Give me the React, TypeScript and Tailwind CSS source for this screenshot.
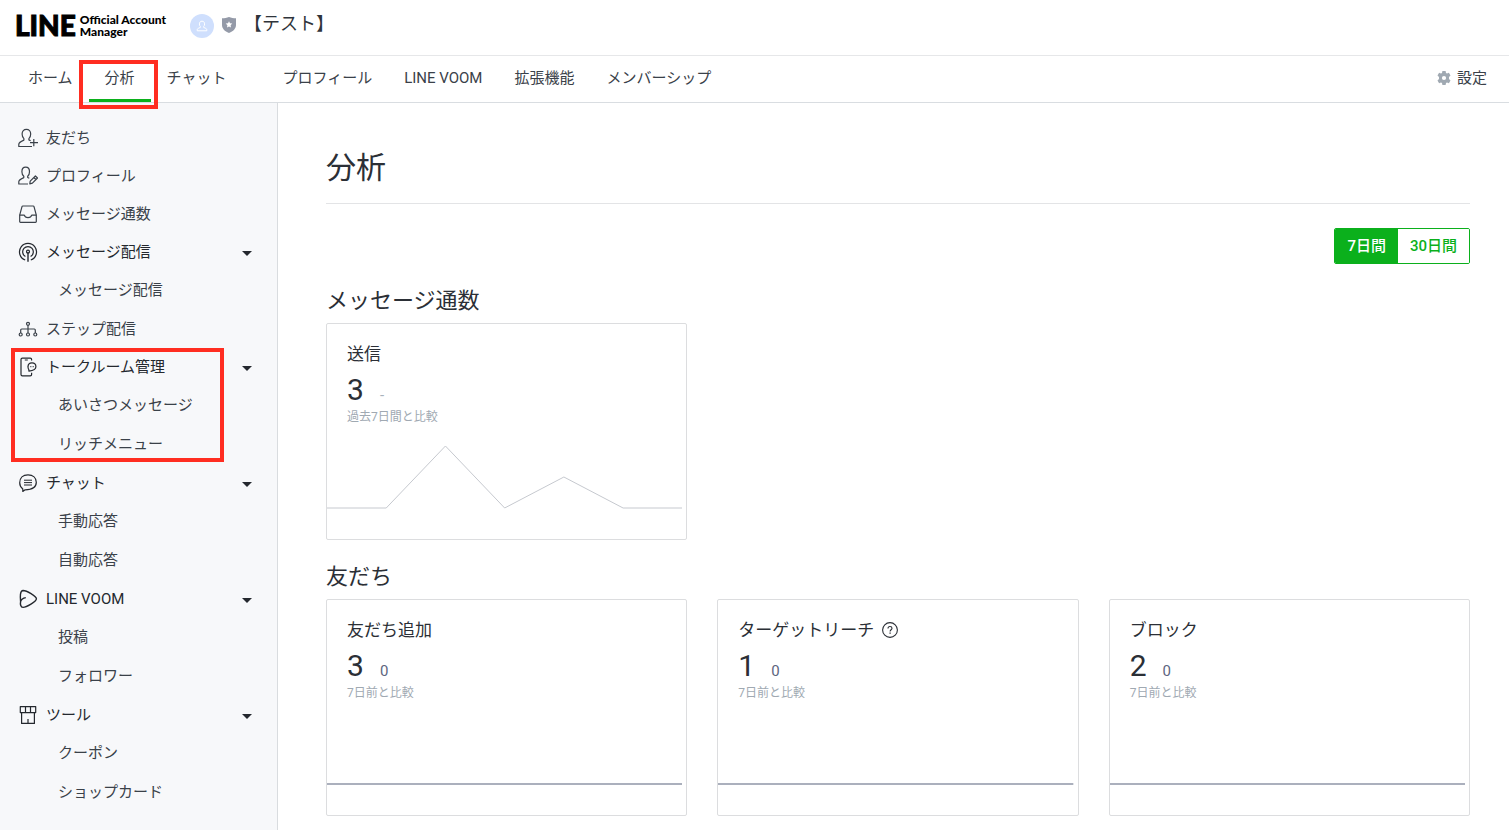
import { useState, type ReactNode } from 'react'
import clsx from 'clsx'

type Metric = {
  title: string
  value: number
  diff: string
  note: string
  points: number[]
  help?: boolean
}

type SideItem = {
  label: string
  icon: ReactNode
  children?: string[]
  marked?: boolean
}

/** 20px line icon used in the side menu. */
function LineIcon({ children }: { children: ReactNode }) {
  return (
    <svg
      viewBox="0 0 20 20"
      className="size-5 shrink-0"
      fill="none"
      stroke="currentColor"
      strokeWidth="1.2"
      strokeLinejoin="round"
      aria-hidden="true"
    >
      {children}
    </svg>
  )
}

const icons = {
  friends: (
    <LineIcon>
      <path d="M14 18.500H.8v-2.200c0-1.500 1-2.500 5.100-4.200V10.600C4.700 9.600 4.100 8 4.100 6 4.100 3.200 5.800 1.400 8.400 1.400s4.300 1.800 4.300 4.600c0 2-.6 3.600-1.800 4.600v1.300l1.700.9" />
      <path d="M15.800 11v7.300M12 14.600h8" />
    </LineIcon>
  ),
  profile: (
    <LineIcon>
      <path d="M10 18H.8v-2.200c0-1.500 1-2.500 5-4.200V10.200C4.500 9.200 3.900 7.600 3.900 5.700 3.900 2.900 5.300 1.200 7.700 1.200s3.800 1.700 3.800 4.500c0 1.900-.6 3.500-1.800 4.500v1.300l1.600.8" />
      <path d="M11.800 17.800l.4-2.700 5.200-5.100 2.100 2-5.100 5.200zM15.800 11.500l2.100 2" />
    </LineIcon>
  ),
  inbox: (
    <LineIcon>
      <path d="M1.700 11.200 4 2.700c.1-.4.4-.7.9-.7h10.200c.5 0 .8.3.9.7l2.300 8.500v6.300a.8.800 0 0 1-.8.8h-15a.8.800 0 0 1-.8-.8z" />
      <path d="M1.700 11.200h4.600c.5 1.800 1.800 2.400 3.700 2.400s3.200-.6 3.700-2.400h4.600" />
    </LineIcon>
  ),
  broadcast: (
    <LineIcon>
      <path d="M7.200 18a8.500 8.500 0 1 1 5.600 0" />
      <path d="M7.400 14.500a5.300 5.300 0 1 1 5.200 0" />
      <circle cx="10" cy="9.700" r="1.500" />
      <path d="M10 10v9.800" strokeWidth="1.400" />
    </LineIcon>
  ),
  steps: (
    <LineIcon>
      <circle cx="10" cy="4.800" r="1.500" />
      <circle cx="2.700" cy="15.500" r="1.500" />
      <circle cx="10" cy="15.500" r="1.500" />
      <circle cx="17.300" cy="15.500" r="1.500" />
      <path d="M10 6.300V14M2.700 14v-3c0-.7.3-1 1-1h12.600c.7 0 1 .3 1 1v3" />
    </LineIcon>
  ),
  talkroom: (
    <LineIcon>
      <path d="M13.600 3.400V2.500c0-.9-.5-1.400-1.400-1.400H4.400c-.9 0-1.400.5-1.400 1.400v15c0 .9.500 1.400 1.400 1.400h7.800c.9 0 1.400-.5 1.400-1.400v-1.700M6.800 3h3" />
      <path d="M11 14.200l-.2-1.600a4.300 4.300 0 0 1-.8-2.700c0-2.400 1.700-4 4-4s3.900 1.600 3.900 3.900c0 2.800-2.500 3.900-6.900 4.400z" />
      <path d="M12 9.700h4" strokeWidth=".8" strokeDasharray="1 .5" />
    </LineIcon>
  ),
  chat: (
    <LineIcon>
      <path d="M4.800 18.400v-2.500C2.800 14.500 1.700 12.400 1.700 9.800c0-4.900 3.300-8 8.300-8s8.300 3 8.300 7.500c0 5.400-4.800 7.500-11.200 7.500z" />
      <path d="M6 7.200h8M6 9.600h8M6 12h8" strokeWidth="1" />
    </LineIcon>
  ),
  voom: (
    <LineIcon>
      <path
        d="M7.800 8.600C5.500 9 3.300 10.200 2.600 12.600 2.200 14.700 2.400 18.400 5 18.400c3.300-.2 13.400-5.600 13.400-8.600C18.400 6.900 8.500 1.500 5.100 1.500 1.600 1.700 2.300 8.500 2.600 12.600"
        strokeWidth="1.400"
      />
    </LineIcon>
  ),
  tools: (
    <LineIcon>
      <path d="M2.300 1.600h15.400v6H2.300zM7.500 1.600v6M12.500 1.600v6M3.600 7.600v10.800h12.800V7.600M10 18.400v-4.500" />
    </LineIcon>
  ),
}

const sideItems: SideItem[] = [
  { label: '友だち', icon: icons.friends },
  { label: 'プロフィール', icon: icons.profile },
  { label: 'メッセージ通数', icon: icons.inbox },
  { label: 'メッセージ配信', icon: icons.broadcast, children: ['メッセージ配信'] },
  { label: 'ステップ配信', icon: icons.steps },
  {
    label: 'トークルーム管理',
    icon: icons.talkroom,
    children: ['あいさつメッセージ', 'リッチメニュー'],
    marked: true,
  },
  { label: 'チャット', icon: icons.chat, children: ['手動応答', '自動応答'] },
  { label: 'LINE VOOM', icon: icons.voom, children: ['投稿', 'フォロワー'] },
  { label: 'ツール', icon: icons.tools, children: ['クーポン', 'ショップカード'] },
]

const mainTabs = ['ホーム', '分析', 'チャット']
const subTabs = ['プロフィール', 'LINE VOOM', '拡張機能', 'メンバーシップ']

const messageMetric: Metric = {
  title: '送信',
  value: 3,
  diff: '-',
  note: '過去7日間と比較',
  points: [0, 0, 2, 0, 1, 0, 0],
}

const friendMetrics: Metric[] = [
  { title: '友だち追加', value: 3, diff: '0', note: '7日前と比較', points: [0, 0, 0, 0, 0, 0, 0] },
  { title: 'ターゲットリーチ', value: 1, diff: '0', note: '7日前と比較', points: [0, 0, 0, 0, 0, 0, 0], help: true },
  { title: 'ブロック', value: 2, diff: '0', note: '7日前と比較', points: [0, 0, 0, 0, 0, 0, 0] },
]

/** Red frame laid over an area of the screen. */
function Marker({ className }: { className: string }) {
  return <span className={clsx('pointer-events-none absolute z-10 border-4 border-[#ff2d21]', className)} />
}

function Header() {
  return (
    <header className="flex h-14 items-start border-b border-[#e6e7e9] px-[15px] pt-[10px]">
      <a href="#" className="mt-[2px] flex items-center gap-1 font-['Lato'] font-black text-black">
        <span className="text-[28px] leading-6 [-webkit-text-stroke:1px_black]">LINE</span>
        <span className="pt-[2px] text-xs leading-3">
          Official Account
          <br />
          Manager
        </span>
      </a>
      <div className="ml-6 flex items-center gap-[7px]">
        <span className="mt-1 flex size-6 items-center justify-center rounded-full bg-[#cfdffd]">
          <svg viewBox="0 0 12 12" className="size-3" fill="none" stroke="#fff" aria-hidden="true">
            <path d="M1.200 10.800V9.700c0-1 .7-1.300 3.200-2.300v-.8c-.7-.6-1-1.500-1-2.700C3.400 2.300 4.400 1.200 6 1.200s2.600 1.100 2.600 2.700c0 1.200-.3 2.100-1 2.700v.8c2.500 1 3.200 1.300 3.200 2.300v1.100z" />
          </svg>
        </span>
        <svg viewBox="0 0 16 16" className="mt-[2px] size-4" aria-hidden="true">
          <path d="M8 0c2.200 1 4.500 1.300 7 1.300V8c0 3.500-2.700 6.300-7 8-4.300-1.700-7-4.500-7-8V1.300C3.500 1.300 5.800 1 8 0z" fill="#949aa8" />
          <path d="M8 4.200l1 2.100 2.300.3-1.700 1.600.4 2.300-2-1.100-2 1.100.4-2.300-1.700-1.600L7 6.300z" fill="#fff" />
        </svg>
        <span className="text-lg leading-6 text-[#2f343b]">【テスト】</span>
      </div>
    </header>
  )
}

function TopNav() {
  const [active, setActive] = useState('分析')

  const renderTab = (tab: string) => (
    <li key={tab} className="relative flex">
      <button type="button" onClick={() => setActive(tab)} className="relative px-4 pb-[2px] whitespace-nowrap">
        {tab}
        {tab === active && <span className="absolute inset-x-0 bottom-0 h-[3px] bg-[#0bb01c]" />}
      </button>
      {tab === '分析' && <Marker className="top-1 -right-[7px] -bottom-[7px] -left-[10px]" />}
    </li>
  )

  return (
    <nav className="flex h-[47px] border-b border-[#d9dde1] px-3 text-[15px] text-[#3a4149]">
      <ul className="flex">{mainTabs.map(renderTab)}</ul>
      <ul className="ml-6 flex">{subTabs.map(renderTab)}</ul>
      <a href="#" className="mr-[10px] ml-auto flex items-center gap-[6px] pb-[2px]">
        <svg viewBox="0 0 14 14" className="size-[14px]" aria-hidden="true">
          <path
            fill="#a0a9b2"
            fillRule="evenodd"
            d="M5.400 0h3.200l.4 1.900 1 .6 1.900-.7 1.600 2.800L12 5.900v2.200l1.500 1.300-1.600 2.800-1.900-.7-1 .6-.4 1.900H5.400L5 12.100l-1-.6-1.900.7L.5 9.400 2 8.100V5.900L.5 4.600l1.600-2.800 1.900.7 1-.6zM7 4.900a2.100 2.100 0 1 0 0 4.200 2.100 2.100 0 0 0 0-4.200z"
          />
        </svg>
        設定
      </a>
    </nav>
  )
}

function SideMenuItem({ item }: { item: SideItem }) {
  const [open, setOpen] = useState(true)
  const row = 'flex h-[38px] w-full items-center gap-2 pr-[25px] pl-[18px] text-left'

  if (!item.children) {
    return (
      <li>
        <a href="#" className={row}>
          {item.icon}
          {item.label}
        </a>
      </li>
    )
  }

  return (
    <li className="relative">
      <button
        type="button"
        aria-expanded={open}
        onClick={() => setOpen(!open)}
        className={clsx(row, 'text-[#24282e]')}
      >
        {item.icon}
        {item.label}
        <svg viewBox="0 0 10 5" className="mt-[2px] ml-auto h-[5px] w-[10px]" aria-hidden="true">
          <path d="M0 0h10L5 5z" fill="currentColor" />
        </svg>
      </button>
      {open && (
        <ul>
          {item.children.map((child) => (
            <li key={child}>
              <a href="#" className="flex h-[39px] items-center pl-[58px]">
                {child}
              </a>
            </li>
          ))}
        </ul>
      )}
      {item.marked && <Marker className="top-0 right-[53px] bottom-[2px] left-[11px]" />}
    </li>
  )
}

function Sparkline({ points }: { points: number[] }) {
  const flat = points.every((p) => p === 0)
  const step = 354 / (points.length - 1)
  const path = points.map((p, i) => `${i * step},${70 - p * 31}`).join(' ')

  return (
    <div className="pr-1">
      <svg viewBox="0 0 354 101" preserveAspectRatio="none" className="block h-[101px] w-full" aria-hidden="true">
        <polyline
          points={path}
          fill="none"
          stroke={flat ? '#abb0bd' : '#c6c9cf'}
          strokeWidth={flat ? 2 : 1}
          vectorEffect="non-scaling-stroke"
        />
      </svg>
    </div>
  )
}

function MetricCard({ metric }: { metric: Metric }) {
  return (
    <article className="rounded-xs border border-[#dcdddf] bg-white">
      <div className="px-5 pt-[18px] pb-[13px]">
        <h3 className="flex items-center gap-2 text-[17px] leading-6">
          {metric.title}
          {metric.help && (
            <button type="button" aria-label="ヘルプ">
              <svg viewBox="0 0 16 16" className="size-4" fill="none" stroke="currentColor" aria-hidden="true">
                <circle cx="8" cy="8" r="7.400" strokeWidth="1.100" />
                <path d="M6 6.500c0-1.300.9-2 2-2s2 .7 2 1.800c0 1.400-1.900 1.500-1.900 3.100" strokeWidth="1.100" />
                <path d="M8.100 10.500v1.300" strokeWidth="1.300" />
              </svg>
            </button>
          )}
        </h3>
        <p className="mt-[6px] flex h-9 items-baseline gap-4 text-3xl leading-9">
          {metric.value}
          <span
            className={clsx('text-[15px] leading-4', metric.diff === '-' ? 'text-[#a9b2bb]' : 'text-[#5d6580]')}
          >
            {metric.diff}
          </span>
        </p>
        <p className="mt-px text-xs leading-4 text-[#a0a9b2]">{metric.note}</p>
      </div>
      <Sparkline points={metric.points} />
    </article>
  )
}

function Section({ title, metrics }: { title: string; metrics: Metric[] }) {
  return (
    <section className="mt-[21px]">
      <h2 className="mb-[6px] text-[22px] leading-8">{title}</h2>
      <div className="grid grid-cols-3 gap-[30px]">
        {metrics.map((metric) => (
          <MetricCard key={metric.title} metric={metric} />
        ))}
      </div>
    </section>
  )
}

export default function App() {
  const [range, setRange] = useState('7日間')

  return (
    <div
      lang="ja"
      className="flex min-h-screen flex-col bg-white font-['Roboto','Noto_Sans_CJK_JP',sans-serif] text-[#2b2f36]"
    >
      <Header />
      <TopNav />
      <div className="flex flex-1">
        <aside className="w-[278px] shrink-0 border-r border-[#d9dcdf] bg-[#f7f8fa] pt-4 text-[15px] text-[#3a4149]">
          <ul>
            {sideItems.map((item) => (
              <SideMenuItem key={item.label} item={item} />
            ))}
          </ul>
        </aside>
        <main className="min-w-0 flex-1 pt-[45px] pr-[39px] pb-3 pl-12">
          <h1 className="border-b border-[#e3e4e6] pb-[15px] text-3xl leading-10">分析</h1>
          <div className="mt-6 flex justify-end">
            <div className="flex h-9 overflow-hidden rounded-xs border border-[#0bb01c] text-[15px]">
              {['7日間', '30日間'].map((label) => (
                <button
                  key={label}
                  type="button"
                  aria-pressed={range === label}
                  onClick={() => setRange(label)}
                  className={clsx(
                    'px-3 font-medium',
                    range === label ? 'bg-[#0bb01c] text-white' : 'bg-white text-[#0bb01c]',
                  )}
                >
                  {label}
                </button>
              ))}
            </div>
          </div>
          <Section title="メッセージ通数" metrics={[messageMetric]} />
          <Section title="友だち" metrics={friendMetrics} />
        </main>
      </div>
    </div>
  )
}
